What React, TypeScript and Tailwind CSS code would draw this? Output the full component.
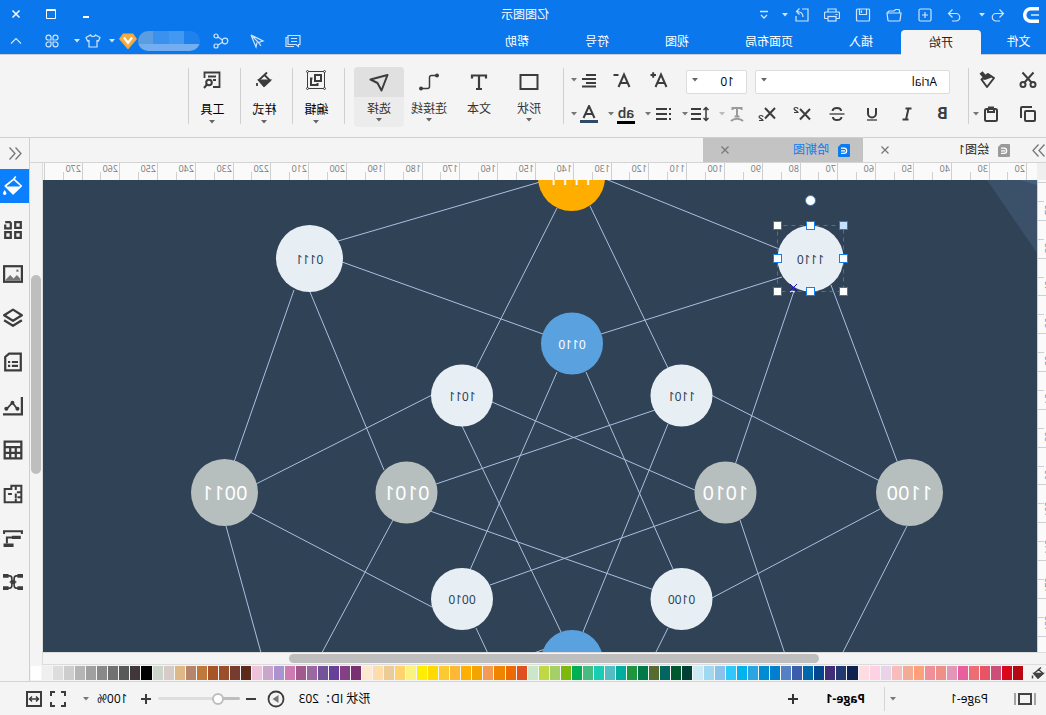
import type { ReactNode } from 'react';
import { clsx } from 'clsx';

type IconProps = { size?: number; box?: number; stroke?: number; className?: string; children: ReactNode };

/** Line icon drawn on its own pixel grid; `box` is the viewBox when it differs from the size. */
function Icon({ size = 18, box = size, stroke = 2, className, children }: IconProps) {
  return (
    <svg
      width={size}
      height={size}
      viewBox={`0 0 ${box} ${box}`}
      fill="none"
      stroke="currentColor"
      strokeWidth={stroke}
      className={clsx('shrink-0', className)}
      aria-hidden="true"
    >
      {children}
    </svg>
  );
}

function Caret({ className }: { className?: string }) {
  return (
    <svg width="6" height="4" viewBox="0 0 6 4" className={clsx('shrink-0', className)} aria-hidden="true">
      <path d="M0 0h6L3 3.5z" fill="currentColor" />
    </svg>
  );
}

function IconButton({ label, className, children }: { label: string; className?: string; children: ReactNode }) {
  return (
    <button type="button" aria-label={label} className={clsx('flex items-center justify-center', className)}>
      {children}
    </button>
  );
}

/* ---------- Header ---------- */

const MENUS = ['插入', '页面布局', '视图', '符号', '帮助'];

function TitleBar() {
  return (
    <div className="grid h-[30px] grid-cols-[1fr_auto_1fr] items-center">
      <div className="flex items-center pl-[7px] text-white/80">
        <Icon size={16} stroke={3.5} className="text-white">
          <path d="M0 1.7h8a6.3 6.3 0 0 1 0 12.6H0" />
          <path d="M0 8h8" stroke="#9fd0ff" strokeWidth="2" />
        </Icon>
        <IconButton label="撤销" className="ml-4 w-[18px]">
          <Icon size={16} stroke={1.2}>
            <path d="m6.5 2.5-4 4 4 4M2.5 6.5H10a3.5 3.5 0 0 1 0 7.500H6" />
          </Icon>
        </IconButton>
        <Caret className="ml-1" />
        <IconButton label="重做" className="ml-4 w-[18px]">
          <Icon size={16} stroke={1.2}>
            <path d="m9.5 2.5 4 4-4 4M13.5 6.5H6A3.5 3.5 0 0 0 6 14h4" />
          </Icon>
        </IconButton>
        <IconButton label="新建" className="ml-1 w-[31px]">
          <Icon size={16} stroke={1.2}>
            <rect x="2" y="2" width="12" height="12" rx="1.5" />
            <path d="M8 5v6M5 8h6" />
          </Icon>
        </IconButton>
        <IconButton label="打开" className="w-[31px]">
          <Icon size={16} stroke={1.2}>
            <path d="M2.5 6V3.5a1 1 0 0 1 1-1h3L8 4h5a1 1 0 0 1 1 1v1M1 6h14l-1 7.5a1 1 0 0 1-1 .5H3a1 1 0 0 1-1-.5z" />
          </Icon>
        </IconButton>
        <IconButton label="保存" className="w-[31px]">
          <Icon size={16} stroke={1.2}>
            <rect x="1.5" y="2" width="13" height="12" rx="1" />
            <path d="M4.5 2v5.5h7V2M9.5 3.5V6" />
          </Icon>
        </IconButton>
        <IconButton label="打印" className="w-[31px]">
          <Icon size={16} stroke={1.2}>
            <path d="M4 5V2h8v3M3.5 11.5h-2a1 1 0 0 1-1-1V6a1 1 0 0 1 1-1h13a1 1 0 0 1 1 1v4.5a1 1 0 0 1-1 1h-2M2.5 7.5h2" />
            <rect x="4" y="9.5" width="8" height="4.5" />
          </Icon>
        </IconButton>
        <IconButton label="导出" className="w-[29px]">
          <Icon size={16} stroke={1.2}>
            <path d="M8 2H2v12h12V9M7 10c0-3.5 2-5.5 6.5-5.5M10.5 1.5l3 3-3 3" />
          </Icon>
        </IconButton>
        <Caret />
        <IconButton label="自定义" className="ml-1.5 w-6">
          <Icon size={10} stroke={1.3}>
            <path d="M1 1.5h8M2 5l3 3 3-3" />
          </Icon>
        </IconButton>
      </div>
      <h1 className="pr-1 text-xs text-white">亿图图示</h1>
      <div className="flex items-center justify-end gap-[19px] pr-2 pb-0.5 text-white">
        <IconButton label="最小化" className="w-4">
          <Icon size={10}>
            <path d="M2 8h6" />
          </Icon>
        </IconButton>
        <IconButton label="最大化" className="w-4">
          <Icon size={10} stroke={1}>
            <path d="M.5.5h9v9h-9zM.5 1.5h9" />
          </Icon>
        </IconButton>
        <IconButton label="关闭" className="w-4">
          <Icon size={10} stroke={1.5}>
            <path d="m1.5 1.5 7 7m0-7-7 7" />
          </Icon>
        </IconButton>
      </div>
    </div>
  );
}

function MenuBar() {
  return (
    <div className="flex h-[25px] justify-between border-b border-[#c9cdd1] text-xs text-white">
      <nav className="flex">
        <button type="button" className="w-[65px] pr-[10px]">
          文件
        </button>
        <button type="button" className="-mb-px rounded-t-sm bg-[#f4f4f4] px-7 text-[#222]">
          开始
        </button>
        {MENUS.map((menu) => (
          <button key={menu} type="button" className="px-7">
            {menu}
          </button>
        ))}
      </nav>
      <div className="flex items-center pr-2 pb-0.5 text-white/80">
        <IconButton label="消息">
          <Icon size={16} stroke={1.2}>
            <path d="M1 2.5h12v9H5l-2.5 2v-2H1zM13 4.5h2v9H7M4 5.5h6M4 8.5h6" />
          </Icon>
        </IconButton>
        <IconButton label="发送" className="ml-5">
          <Icon size={16} stroke={1.2}>
            <path d="M14 2 2 8l4.500 1.500zM14 2 9 14 8 9.500M14 2 6.500 9.500 4 13" />
          </Icon>
        </IconButton>
        <IconButton label="分享" className="ml-5">
          <Icon size={16} stroke={1.2}>
            <circle cx="4" cy="8" r="2.8" />
            <circle cx="13" cy="3" r="2" />
            <circle cx="13" cy="13" r="2" />
            <path d="M6.5 7 11 4M6.5 9.2 11 12" />
          </Icon>
        </IconButton>
        <div className="ml-[13px] flex h-5 w-[62px] flex-col overflow-hidden rounded-full">
          <div className="flex flex-1">
            <span className="flex-1 bg-[#1f82ec]" />
            <span className="flex-1 bg-[#4398f2]" />
            <span className="flex-1 bg-[#3a91ee]" />
            <span className="flex-1 bg-[#5c9ce0]" />
          </div>
          <div className="h-[7px] bg-[#72aef0]" />
        </div>
        <svg width="18" height="17" viewBox="0 0 18 17" className="ml-px" aria-hidden="true">
          <path d="M4 .5h10L18 6l-9 10.500L0 6z" fill="#f5ab3d" />
          <path d="m5 4.500 4 5.500 4-5.500" fill="none" stroke="#fff" strokeWidth="2.2" />
        </svg>
        <Caret className="ml-1" />
        <IconButton label="皮肤" className="ml-2">
          <Icon size={16} stroke={1.2}>
            <path d="M5.5 2 1 4.5 2.5 8 4 7.500V14h8V7.500l1.5.5L15 4.500 10.500 2c-.5 2-4.500 2-5 0z" />
          </Icon>
        </IconButton>
        <Caret className="ml-[5px]" />
        <IconButton label="应用" className="ml-[14px]">
          <Icon size={16} stroke={1.2}>
            <path d="M7 7H4a2.5 2.5 0 1 1 3-2.5zM9 7h3a2.5 2.5 0 1 0-3-2.5zM7 9H4a2.5 2.5 0 1 0 3 2.5zM9 9h3a2.5 2.5 0 1 1-3 2.5z" />
          </Icon>
        </IconButton>
        <IconButton label="收起功能区" className="ml-5">
          <Icon size={16} stroke={1.2}>
            <path d="m3 10.5 5-5 5 5" />
          </Icon>
        </IconButton>
      </div>
    </div>
  );
}

/* ---------- Ribbon ---------- */

function Divider() {
  return <div className="mt-[13px] h-14 w-px shrink-0 bg-[#cfcfcf]" />;
}

function Split({ label, muted, children }: { label: string; muted?: boolean; children: ReactNode }) {
  return (
    <button type="button" aria-label={label} className={clsx('flex w-[27px] items-center gap-[3px]', muted && 'text-[#9a9a9a]')}>
      {children}
      <Caret className={muted ? 'text-[#bbb]' : 'text-[#777]'} />
    </button>
  );
}

function Picker({ label, value, options, className }: { label: string; value: string; options: string[]; className: string }) {
  return (
    <div className={clsx('relative h-6', className)}>
      <select
        aria-label={label}
        defaultValue={value}
        className="h-full w-full appearance-none rounded-[2px] border border-[#dcdcdc] bg-white pl-3 text-xs text-black"
      >
        {options.map((option) => (
          <option key={option}>{option}</option>
        ))}
      </select>
      <Caret className="pointer-events-none absolute top-[10px] right-[6px] text-[#666]" />
    </div>
  );
}

function ClipboardGroup() {
  return (
    <div className="flex w-[77px] flex-col gap-[10px] pt-[13px] pl-[9px]">
      <div className="flex h-6 items-center gap-[22px]">
        <IconButton label="剪切">
          <Icon>
            <circle cx="4" cy="13.5" r="2.5" />
            <circle cx="14" cy="13.5" r="2.5" />
            <path d="m3.5 1.500 9 10M14.500 1.500l-9 10" />
          </Icon>
        </IconButton>
        <IconButton label="格式刷">
          <Icon>
            <path d="m3 7 6-4 6.500 5.500L10 16z" strokeLinejoin="round" />
            <path d="m4 6 6-3.500L15.500 8 12 9z" fill="currentColor" stroke="none" />
            <path d="m12.500 5.500 3.500-4" strokeWidth="4" />
          </Icon>
        </IconButton>
      </div>
      <div className="flex h-6 items-center">
        <IconButton label="复制">
          <Icon>
            <rect x="2" y="6" width="10" height="10" rx="1" />
            <path d="M5 2h10a1 1 0 0 1 1 1v10" />
          </Icon>
        </IconButton>
        <IconButton label="粘贴" className="ml-[19px] gap-[3px]">
          <Icon>
            <rect x="3" y="4" width="12" height="12" rx="1.5" />
            <path d="M6 3.500V7h6V3.500M6 2.500h6" />
          </Icon>
          <Caret className="text-[#777]" />
        </IconButton>
      </div>
    </div>
  );
}

function FontGroup() {
  return (
    <div className="flex w-[404px] flex-col gap-[10px] pt-[13px] pl-2">
      <div className="flex h-6 items-center pl-[10px]">
        <Picker label="字体" value="Arial" options={['Arial', 'Times New Roman', 'Courier New']} className="w-[195px]" />
        <Picker label="字号" value="10" options={['8', '9', '10', '11', '12']} className="ml-2 w-[61px]" />
        <div className="ml-[18px] flex items-center gap-[19px]">
          <IconButton label="增大字号" className="w-[18px]">
            <Icon>
              <path d="M1.5 16 7 3.500 12.500 16M3.500 12h7M12 4h5.500M14.800 1.200v5.600" />
            </Icon>
          </IconButton>
          <IconButton label="减小字号" className="w-[18px]">
            <Icon>
              <path d="M1.5 16 7 3.500 12.500 16M3.500 12h7M12.500 4h5" />
            </Icon>
          </IconButton>
        </div>
        <div className="ml-[15px]">
          <Split label="对齐方式">
            <Icon>
              <path d="M2 4h10M2 8h14M2 12h10M2 15.500h14" />
            </Icon>
          </Split>
        </div>
      </div>
      <div className="flex h-6 items-center">
        <IconButton label="加粗" className="w-[35px] font-['Roboto',sans-serif] text-base leading-none font-bold">
          B
        </IconButton>
        <IconButton label="斜体" className="w-[35px]">
          <Icon>
            <path d="M4.500 3.500h6M7.500 3.500l2.500 11M7.500 14.500h6" />
          </Icon>
        </IconButton>
        <IconButton label="下划线" className="w-[35px]">
          <Icon>
            <path d="M5 3v5.500a4 4 0 0 0 8 0V3" />
            <path d="M4 15h10" strokeWidth="1.3" />
          </Icon>
        </IconButton>
        <IconButton label="删除线" className="w-[35px]">
          <Icon>
            <path d="M13.500 6C13 2 5 2 5 6M4.500 12c.5 4 8.500 4 8.500 0" />
            <path d="M1.500 9h15" strokeWidth="1.3" />
          </Icon>
        </IconButton>
        <IconButton label="上标" className="w-[35px]">
          <Icon>
            <path d="m1 4 10 10.500M11 4 1 14.500" />
            <path d="M13 4c0-2 4-2 4 0 0 1-4 2-4 3.500h4" strokeWidth="1.2" />
          </Icon>
        </IconButton>
        <IconButton label="下标" className="w-[35px]">
          <Icon>
            <path d="m1 3 10 10.500M11 3 1 13.500" />
            <path d="M13 12c0-2 4-2 4 0 0 1-4 2-4 3.500h4" strokeWidth="1.2" />
          </Icon>
        </IconButton>
        <div className="ml-1 flex gap-[10px]">
          <Split label="文字效果" muted>
            <Icon>
              <path d="M4.500 5V3h9v2M9 3v9M6.500 11.500h5" />
              <path d="M3 16c3-3 9-3 12 0" />
            </Icon>
          </Split>
          <Split label="行距">
            <Icon>
              <path d="M3 3v12M.5 5 3 2.500 5.500 5M.5 13 3 15.500 5.500 13" strokeWidth="1.5" />
              <path d="M8 4h10M8 9h10M8 14h10" />
            </Icon>
          </Split>
          <Split label="项目符号">
            <Icon>
              <path d="M1 4h2M1 9h2M1 14h2M5 4h11M5 9h11M5 14h11" />
            </Icon>
          </Split>
          <Split label="突出显示">
            <span className="flex w-[18px] flex-col items-center border-b-3 border-black font-['Roboto',sans-serif] text-[15px] leading-4 font-medium">
              ab
            </span>
          </Split>
          <Split label="字体颜色">
            <Icon>
              <path d="M3.500 13 9 1l5.500 12M5.500 9h7" />
              <path d="M0 16.500h18" stroke="#304a66" strokeWidth="3" />
            </Icon>
          </Split>
        </div>
      </div>
    </div>
  );
}

function BigTool({ label, active, caret = true, children }: { label: string; active?: boolean; caret?: boolean; children: ReactNode }) {
  return (
    <button
      type="button"
      aria-pressed={!!active}
      className={clsx('mt-3 flex h-15 w-[50px] flex-col items-center rounded-sm', active && 'overflow-hidden bg-[#ececec]')}
    >
      <span className={clsx('flex h-[30px] w-full items-center justify-center', active && 'bg-[#e0e0e0]')}>{children}</span>
      <span className="mt-1 text-xs leading-4 text-[#333]">{label}</span>
      {caret && <Caret className="mt-px text-[#666]" />}
    </button>
  );
}

function MenuTool({ label, children }: { label: string; children: ReactNode }) {
  return (
    <button type="button" className="mt-[13px] flex h-15 w-[51px] flex-col items-center pl-1">
      <span className="flex h-6 items-center">{children}</span>
      <span className="mt-[10px] text-xs leading-4 text-black">{label}</span>
      <Caret className="mt-[2px] text-[#666]" />
    </button>
  );
}

function Ribbon() {
  return (
    <div className="flex h-[83px] shrink-0 border-b border-[#cfcfcf] text-[#3c3c3c]">
      <ClipboardGroup />
      <Divider />
      <FontGroup />
      <Divider />
      <div className="flex px-[9px]">
        <BigTool label="形状">
          <Icon size={20}>
            <rect x="1.5" y="3" width="17" height="14" />
          </Icon>
        </BigTool>
        <BigTool label="文本" caret={false}>
          <Icon size={20}>
            <path d="M3 6.500v-3h14v3M10 3.500V17M7 17h6" strokeWidth="2.2" />
          </Icon>
        </BigTool>
        <BigTool label="连接线">
          <Icon size={20} stroke={1.5}>
            <path d="M2 3.500h5.500q2 0 2 2v9q0 2 2 2H18" />
            <circle cx="2" cy="3.5" r="2" fill="currentColor" stroke="none" />
            <circle cx="18" cy="16.5" r="2" fill="currentColor" stroke="none" />
          </Icon>
        </BigTool>
        <BigTool label="选择" active>
          <Icon size={20}>
            <path d="m1.500 3 17 4.500-7 3.500-4 7.500z" strokeLinejoin="round" />
          </Icon>
        </BigTool>
      </div>
      <Divider />
      <MenuTool label="编辑">
        <Icon size={20} stroke={1}>
          <path d="M1.500 1.500h17v17h-17z" />
          <g fill="#f4f4f4">
            <circle cx="1.5" cy="1.5" r="1" />
            <circle cx="18.5" cy="1.5" r="1" />
            <circle cx="1.5" cy="18.5" r="1" />
            <circle cx="18.5" cy="18.5" r="1" />
          </g>
          <path d="M5 5h6v6H5zM13.500 8.500H15V15H8.500v-2" strokeWidth="2" />
        </Icon>
      </MenuTool>
      <Divider />
      <MenuTool label="样式">
        <Icon stroke={1.8}>
          <path d="m6 1.500 8 7.500-5 6-6-5.500 5-5" strokeLinejoin="round" />
          <path d="M3 9.500h11L9 15z" fill="currentColor" />
          <path d="M16 12v3" />
        </Icon>
      </MenuTool>
      <Divider />
      <MenuTool label="工具">
        <Icon>
          <path d="M8 16H1.500V1.500h15V7M5 5.500h8M5 9h3" strokeWidth="1.8" />
          <circle cx="12" cy="11.5" r="2.8" />
          <path d="m14 13.500 3 3.500" />
        </Icon>
      </MenuTool>
      <Divider />
    </div>
  );
}

/* ---------- Document area ---------- */

function DocTab({ name, active }: { name: string; active?: boolean }) {
  return (
    <div className={clsx('flex w-40 items-center pl-[13px] text-xs', active ? 'bg-[#c3c3c3] text-[#0a7cf0]' : 'text-[#222]')}>
      <svg width="12" height="13" viewBox="0 0 12 13" className={active ? 'text-[#0a7cf0]' : 'text-[#9a9a9a]'} aria-hidden="true">
        <path d="M1 0h8l3 3v9a1 1 0 0 1-1 1H1a1 1 0 0 1-1-1V1a1 1 0 0 1 1-1z" fill="currentColor" />
        <path d="M9 4.200H6a2.600 2.600 0 0 0 0 5.200h3M5 6.800h4" fill="none" stroke="#fff" strokeWidth="1.3" />
      </svg>
      <span className="ml-[9px] flex-1">{name}</span>
      <IconButton label={`关闭 ${name}`} className="mr-[17px] text-[#777]">
        <Icon size={10} stroke={1.2}>
          <path d="m1.500 1.500 7 7m0-7-7 7" />
        </Icon>
      </IconButton>
    </div>
  );
}

const RULER_STEP = 37.8;
const topMarks = Array.from({ length: 27 }, (_, i) => i);
const sideMarks = Array.from({ length: 13 }, (_, i) => i);

function TopRuler() {
  return (
    <svg className="h-[17px] min-w-0 flex-1 bg-[#fafafa]" aria-hidden="true">
      {topMarks.map((i) => {
        const x = Math.round(9.5 + i * RULER_STEP);
        return (
          <g key={i} stroke="#cfcfcf">
            <path d={`M${x + 0.5} 0v17M${x + 19.5} 9v8`} />
            <text x={x + 2} y="9" stroke="none" fill="#777" fontSize="9">
              {20 + i * 10}
            </text>
          </g>
        );
      })}
    </svg>
  );
}

function SideRuler() {
  return (
    <svg className="h-full w-[9px] shrink-0 border-r border-[#cfcfcf] bg-[#fafafa]" aria-hidden="true">
      {sideMarks.map((i) => {
        const y = Math.round(2 + i * RULER_STEP);
        return (
          <g key={i} stroke="#cfcfcf">
            <path d={`M0 ${y + 0.5}h9M2 ${y + 19.5}h7`} />
            <text transform={`translate(1 ${y + 33}) rotate(-90)`} stroke="none" fill="#5d8a99" fontSize="9">
              {20 + i * 10}
            </text>
          </g>
        );
      })}
    </svg>
  );
}

type DiagramNode = { id: string; x: number; y: number; r: number; kind: 'light' | 'gray' | 'blue' | 'orange' };

const NODES: DiagramNode[] = [
  { id: '1111', x: 465.5, y: -2.5, r: 33.5, kind: 'orange' },
  { id: '1110', x: 226.5, y: 78.5, r: 33, kind: 'light' },
  { id: '0111', x: 727.5, y: 78.5, r: 33.5, kind: 'light' },
  { id: '0110', x: 465, y: 163.5, r: 31, kind: 'blue' },
  { id: '1101', x: 355.5, y: 215.5, r: 31, kind: 'light' },
  { id: '1011', x: 575, y: 215.5, r: 31, kind: 'light' },
  { id: '1100', x: 127.5, y: 312.5, r: 33.5, kind: 'gray' },
  { id: '1010', x: 311.5, y: 312.5, r: 31, kind: 'gray' },
  { id: '0101', x: 630.5, y: 312.5, r: 31, kind: 'gray' },
  { id: '0011', x: 812.5, y: 312.5, r: 33.5, kind: 'gray' },
  { id: '0100', x: 355.5, y: 419, r: 31, kind: 'light' },
  { id: '0010', x: 575, y: 419, r: 31, kind: 'light' },
];

const FILLS = {
  light: ['#e8eff4', '#304256', 12],
  gray: ['#b6bebe', '#ffffff', 20],
  blue: ['#5aa1df', '#ffffff', 12],
  orange: ['#ffae00', '#ffffff', 20],
} as const;

// x1, y1, x2, y2 of every connector
const EDGES = [
  [434, -2, 258, 69],
  [497, 2, 699, 61],
  [447, 26, 369, 188],
  [480, 28, 561, 188],
  [206, 105, 140, 281],
  [243, 111, 302, 285],
  [255, 97, 436, 154],
  [695, 82, 494, 154],
  [727, 112, 653, 290],
  [743, 110, 803, 282],
  [326, 215, 157, 301],
  [382, 230, 601, 304],
  [369, 244, 454, 452],
  [605, 215, 781, 304],
  [545, 222, 340, 311],
  [575, 246, 476, 452],
  [451, 192, 364, 389],
  [480, 192, 567, 390],
  [157, 329, 327, 419],
  [130, 346, 198, 480],
  [337, 330, 547, 405],
  [297, 340, 250, 480],
  [607, 331, 380, 411],
  [644, 340, 719, 480],
  [787, 332, 605, 427],
  [811, 346, 774, 480],
  [369, 448, 385, 480],
  [561, 448, 546, 480],
  [492, 469, 506, 474],
];

function Diagram() {
  return (
    <svg className="h-full w-full" role="img" aria-label="哈斯图">
      <path d="M0 0h50L0 73z" fill="#3b5169" />
      <path d="M0 0h17L0 5z" fill="#44607c" />
      <g stroke="#a9c0e0" strokeWidth="1">
        {EDGES.map(([x1, y1, x2, y2]) => (
          <line key={`${x1}-${y1}-${x2}`} x1={x1} y1={y1} x2={x2} y2={y2} />
        ))}
      </g>
      {NODES.map(({ id, x, y, r, kind }) => {
        const [fill, ink, size] = FILLS[kind];
        return (
          <g key={id}>
            <circle cx={x} cy={y} r={r} fill={fill} />
            <text x={x} y={y + (size === 20 ? 7 : 5)} fill={ink} fontSize={size} textAnchor="middle" className="font-['Noto_Sans',sans-serif]">
              {id}
            </text>
          </g>
        );
      })}
      <circle cx="465" cy="481" r="31" fill="#5aa1df" />
      <Selection />
    </svg>
  );
}

/** Dashed frame, eight handles and the rotate knob around node 1110. */
function Selection() {
  const xs = [193, 226, 259];
  const ys = [46, 79, 112];
  return (
    <g stroke="#1080f0">
      <rect x="193.5" y="45.5" width="66" height="66" fill="none" strokeDasharray="4 4" />
      <circle cx="226.5" cy="20.5" r="5" fill="#fff" />
      {xs.map((x, col) =>
        ys.map((y, row) =>
          col === 1 && row === 1 ? null : (
            <rect key={`${col}${row}`} x={x - 3.5} y={y - 4.5} width="8" height="8" fill={col === 0 && row === 0 ? '#c4e1ff' : '#fff'} />
          ),
        ),
      )}
      <path d="m240 104 7 7m0-7-7 7" stroke="#1a1a9c" />
      <path d="m242 112 3-1 2 1" stroke="#fff" fill="none" />
    </g>
  );
}

const SWATCHES = [
  '#b50714', '#d9071b', '#cb4f79', '#e95464', '#ed6d75', '#e95f9c', '#e297b8', '#ee8f88', '#f08f99', '#ffa07a',
  '#f2ac96', '#f7bdbd', '#e9d3e6', '#ffd1e3', '#ffdce2', '#10214f', '#22386f', '#402c77', '#02478e', '#0068a8',
  '#3c5dab', '#5381c4', '#007fce', '#008cd0', '#2ba5e2', '#00b3ef', '#2fc8fa', '#8bc1ea', '#a0d8ef', '#cce9f5',
  '#004035', '#005830', '#00665f', '#566b2f', '#007948', '#1f963d', '#00ae9f', '#54bdc2', '#1acdb2', '#48bb80',
  '#00af52', '#7eb80f', '#a4d067', '#bfd945', '#cbe6c8', '#e3501f', '#ec6a00', '#f08300', '#f39a54', '#f2a500',
  '#ffae03', '#feb836', '#fbca32', '#ffda00', '#ffee00', '#fbf380', '#ffd26e', '#ebcc97', '#ffdcac', '#fde8d0',
  '#7a3172', '#844082', '#664099', '#745498', '#9a69a2', '#a05a8d', '#cd7bb0', '#ab93d1', '#caa6ca', '#eec2da',
  '#5c2a1a', '#773c30', '#984f2a', '#a95427', '#c1783d', '#b5866b', '#deb887', '#d6cbc6', '#cbd5cb', '#000000',
  '#403838', '#5a5858', '#727171', '#898989', '#9fa0a0', '#b5b5b6', '#cccdcd', '#dcdddd', '#efefef', '#ffffff',
];

function Palette() {
  return (
    <div className="flex h-4 shrink-0 items-center pb-px">
      <Icon size={14} stroke={1.5} className="mr-2 ml-px text-[#444]">
        <path d="m4 1.500 7 6-4 4.500-5-4.500L7 3" strokeLinejoin="round" />
        <path d="M2 7.500h9L7 12z" fill="currentColor" />
        <path d="M12.500 9.500v3" />
      </Icon>
      <div className="flex h-[14px] min-w-0 flex-1">
        {SWATCHES.map((color) => (
          <button key={color} type="button" aria-label={color} className="min-w-0 flex-1 border-r border-[#f4f4f4]" style={{ backgroundColor: color }} />
        ))}
      </div>
    </div>
  );
}

/* ---------- Right panel ---------- */

const PANELS: { label: string; icon: ReactNode }[] = [
  {
    label: '填充',
    icon: (
      <>
        <path d="m6.500.5 2 2.500L16 9l-7 7-7.500-7L8 3" strokeWidth="1.5" strokeLinejoin="round" />
        <path d="M2 9.500h14l-7 6.500z" fill="currentColor" stroke="none" />
        <path d="M16.500 12.500q1.500 2 1.500 3a1.500 1.500 0 0 1-3 0q0-1 1.500-3z" fill="currentColor" stroke="none" />
      </>
    ),
  },
  { label: '符号库', icon: <path d="M2 2h5v5H2zM11 2h5M16 4v3.500h-5V2M2 11h5v5H2zM11 11h5v5h-5z" /> },
  {
    label: '图片',
    icon: (
      <>
        <rect x="1" y="2" width="16" height="14" />
        <path d="M2.500 15v-2l3-3 3 3 3-3 4 4v1z" fill="#777" stroke="none" />
        <path d="M4 6h2" stroke="#777" />
      </>
    ),
  },
  { label: '图层', icon: <path d="m9 1.500 8 5-8 5-8-5zM1 11l8 5 8-5" strokeLinejoin="round" /> },
  { label: '页面', icon: <path d="M2 1.500h10.500l3.500 3v12H2zM4.500 9H10M11.500 9h2M4.500 12.500H10M11.500 12.500h2" /> },
  {
    label: '图表',
    icon: (
      <>
        <path d="M1 1v15.500h17" />
        <path d="m5 12 4.500-6L15 12" strokeWidth="1.5" />
        <g fill="currentColor" stroke="none">
          <circle cx="5" cy="11.5" r="1.8" />
          <circle cx="9.5" cy="6" r="1.8" />
          <circle cx="15" cy="11.5" r="1.8" />
        </g>
      </>
    ),
  },
  { label: '表格', icon: <path d="M1.500 1.500h15v15h-15zM1.500 6.500h15M1.500 11.500h15M6.500 6.500v10M11.500 6.500v10" /> },
  {
    label: '平面图',
    icon: <path d="M1.500 16.500v-15h9v3h6v12zM6.500 1.500v4M1.500 7.500h4M6.500 8.500v4M10 9h2.500M1.500 12H5M6.500 13v3.500M12.500 8v2" strokeWidth="1.8" />,
  },
  {
    label: '组织图',
    icon: (
      <>
        <path d="M0 3h18M1 3v2.500M17 3v2.500M9 8.500h5.500V14" strokeWidth="1.8" />
        <path d="M2 8.500h8M8.500 15.500h9" strokeWidth="3" />
      </>
    ),
  },
  {
    label: '导图',
    icon: (
      <>
        <path d="M3 3.500h3q2 0 2 2.500v6q0 2.500-2 2.500H3M15 3.500h-3q-2 0-2 2.500v6q0 2.500 2 2.500h3M6 9h6" strokeWidth="1.5" />
        <path d="M0 3.500h5M13 3.500h5M0 14.500h5M13 14.500h5M7 9h4" strokeWidth="3.5" />
      </>
    ),
  },
];

function SidePanel() {
  return (
    <aside className="flex w-[30px] shrink-0 flex-col border-l border-[#cfcfcf] text-[#3c3c3c]">
      <IconButton label="收起面板" className="h-[31px] pr-px pb-px text-[#777]">
        <Icon size={16} stroke={1.3}>
          <path d="m7.500 2.500-5.500 6 5.500 6M13.500 2.500l-5.500 6 5.500 6" />
        </Icon>
      </IconButton>
      <div className="flex flex-col gap-[10px]">
        {PANELS.map(({ label, icon }, i) => (
          <IconButton key={label} label={label} className={clsx('h-[34px] pl-0.5', i === 0 && 'bg-[#0a80ff] text-white')}>
            <Icon size={20} box={18}>
              {icon}
            </Icon>
          </IconButton>
        ))}
      </div>
    </aside>
  );
}

/* ---------- Status bar ---------- */

function StatusBar() {
  return (
    <footer className="flex h-[34px] shrink-0 items-center justify-between border-t border-[#d4d4d4] text-xs text-black">
      <div className="flex items-center pl-[10px]">
        <IconButton label="页面视图" className="text-[#444]">
          <svg width="22" height="12" viewBox="0 0 22 12" fill="none" stroke="currentColor" strokeWidth="2" aria-hidden="true">
            <rect x="5" y="1" width="12" height="10" />
            <path d="M1 0v12M21 0v12" stroke="#888" strokeWidth="1.5" />
          </svg>
        </IconButton>
        <button type="button" className="ml-[26px] flex w-[98px] items-center justify-between">
          Page-1
          <Caret className="text-[#777]" />
        </button>
        <div className="ml-[5px] h-6 w-px bg-[#d4d4d4]" />
        <button type="button" className="ml-[19px] font-bold">
          Page-1
        </button>
        <IconButton label="添加页面" className="ml-[27px] text-[#333]">
          <Icon size={12}>
            <path d="M6 1v10M1 6h10" />
          </Icon>
        </IconButton>
      </div>
      <div className="flex items-center pr-[25px] text-[#3c3c3c]">
        <span className="text-black">形状 ID：203</span>
        <IconButton label="演示" className="ml-[14px]">
          <Icon stroke={1.8}>
            <circle cx="9" cy="9" r="7.5" />
            <path d="m6.500 5 6 4-6 4z" fill="#777" stroke="none" />
          </Icon>
        </IconButton>
        <IconButton label="缩小" className="ml-[10px]">
          <Icon size={12}>
            <path d="M1 6h10" />
          </Icon>
        </IconButton>
        <input
          type="range"
          aria-label="缩放"
          defaultValue={22}
          className="ml-[5px] h-[3px] w-[82px] appearance-none rounded-full bg-linear-to-r from-[#bebebe] from-30% to-[#dedede] to-30% [&::-webkit-slider-thumb]:size-3 [&::-webkit-slider-thumb]:appearance-none [&::-webkit-slider-thumb]:rounded-full [&::-webkit-slider-thumb]:border-2 [&::-webkit-slider-thumb]:border-[#bebebe] [&::-webkit-slider-thumb]:bg-white"
        />
        <IconButton label="放大" className="ml-[6px]">
          <Icon size={12}>
            <path d="M6 1v10M1 6h10" />
          </Icon>
        </IconButton>
        <button type="button" className="ml-3 flex items-center gap-2 text-black">
          100%
          <Caret className="text-[#777]" />
        </button>
        <IconButton label="全屏" className="ml-4">
          <Icon>
            <path d="M2 6V2h4M12 2h4v4M16 12v4h-4M6 16H2v-4" />
          </Icon>
        </IconButton>
        <IconButton label="适应宽度" className="ml-[6px]">
          <Icon>
            <rect x="2" y="2" width="14" height="14" />
            <path d="M5 9h8M7 6.500 4.500 9 7 11.500M11 6.500 13.500 9 11 11.500" strokeWidth="1.5" />
          </Icon>
        </IconButton>
      </div>
    </footer>
  );
}

export default function App() {
  return (
    <div className="flex h-screen -scale-x-100 flex-col overflow-hidden bg-[#f4f4f4] font-['Open_Sans','Noto_Sans_CJK_SC',sans-serif]">
      <header className="shrink-0 bg-[#0a78ec]">
        <TitleBar />
        <MenuBar />
      </header>
      <Ribbon />
      <div className="flex min-h-0 flex-1">
        <main className="flex min-w-0 flex-1 flex-col">
          <div className="flex h-6 shrink-0">
            <IconButton label="展开面板" className="w-[23px] pr-2 text-[#777]">
              <Icon size={16} stroke={1.3}>
                <path d="m1.500 2.500 5.500 6-5.500 6M7.500 2.500l5.500 6-5.500 6" />
              </Icon>
            </IconButton>
            <DocTab name="绘图1" />
            <DocTab name="哈斯图" active />
          </div>
          <div className="flex min-h-0 flex-1 border-t border-[#d4d4d4]">
            <div className="flex min-w-0 flex-1 flex-col">
              <div className="flex shrink-0">
                <div className="w-[9px] bg-[#efefef]" />
                <TopRuler />
              </div>
              <div className="flex min-h-0 flex-1">
                <SideRuler />
                <div className="min-w-0 flex-1 overflow-hidden bg-[#304256]">
                  <Diagram />
                </div>
              </div>
              <div className="flex h-[13px] shrink-0 items-center border-y border-[#dcdcdc]">
                <div className="flex-[227]" />
                <div className="h-[9px] flex-[530] rounded-full bg-[#bebebe]" />
                <div className="flex-[246]" />
              </div>
            </div>
            <div className="flex w-[13px] shrink-0 flex-col items-center border-l border-[#dcdcdc] pt-28">
              <div className="h-[51%] w-[10px] rounded-full bg-[#bebebe]" />
            </div>
          </div>
          <Palette />
        </main>
        <SidePanel />
      </div>
      <StatusBar />
    </div>
  );
}
